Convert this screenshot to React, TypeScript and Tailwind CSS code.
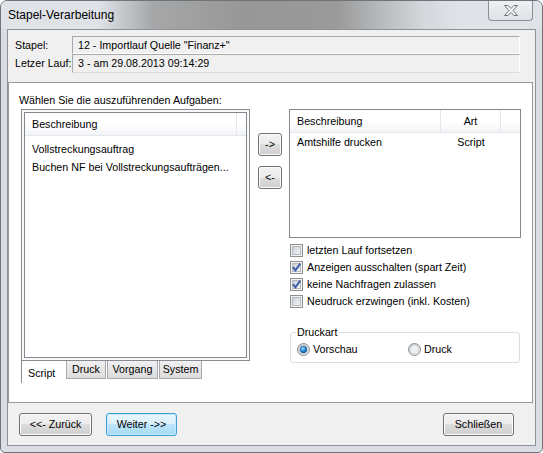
import React from "react";

const font = "font-['Liberation_Sans',Arial,sans-serif]";

function CheckBox({ checked }: { checked?: boolean }) {
  return (
    <svg width="13" height="13" viewBox="0 0 13 13" className="shrink-0">
      <defs>
        <linearGradient id="cbFill" x1="0" y1="0" x2="1" y2="1">
          <stop offset="0" stopColor="#c9cdd3" />
          <stop offset="1" stopColor="#f8f8f8" />
        </linearGradient>
      </defs>
      <rect x="0.5" y="0.5" width="12" height="12" fill="#f4f4f4" stroke="#8e8f8f" />
      <rect x="2.5" y="2.5" width="8" height="8" fill="url(#cbFill)" stroke="#b4b8bf" />
      {checked && (
        <path d="M3 6.2 L5.4 9.3 L10.3 2.6" stroke="#3c5aa8" strokeWidth="1.9" fill="none" />
      )}
    </svg>
  );
}

function Radio({ selected }: { selected?: boolean }) {
  return (
    <svg width="13" height="13" viewBox="0 0 13 13" className="shrink-0">
      <defs>
        <linearGradient id="rbFill" x1="0" y1="0" x2="1" y2="1">
          <stop offset="0" stopColor="#c4c8ce" />
          <stop offset="1" stopColor="#f6f6f6" />
        </linearGradient>
        <radialGradient id="rbDot" cx="0.4" cy="0.35" r="0.7">
          <stop offset="0" stopColor="#9fe0ff" />
          <stop offset="0.5" stopColor="#2a8fd6" />
          <stop offset="1" stopColor="#0d4f8f" />
        </radialGradient>
      </defs>
      <circle cx="6.5" cy="6.5" r="6" fill="url(#rbFill)" stroke="#8e8f8f" />
      <circle cx="6.5" cy="6.5" r="4.3" fill="#eef0f2" stroke="#bfc3c8" strokeWidth="0.6" />
      {selected && <circle cx="6.5" cy="6.5" r="3.4" fill="url(#rbDot)" stroke="#1d4e80" strokeWidth="0.5" />}
    </svg>
  );
}

function Button({ label, primary, className }: { label: string; primary?: boolean; className?: string }) {
  return (
    <div
      className={`h-[23px] flex items-center justify-center rounded-[3px] border whitespace-nowrap ${
        primary
          ? "border-[#3c9fd6] bg-[linear-gradient(#eaf6fd,#d9f0fc_50%,#bee6fd_50%,#a7d9f5)] shadow-[inset_0_0_0_1px_#c8eafc]"
          : "border-[#707070] bg-[linear-gradient(#f2f2f2,#ebebeb_50%,#dddddd_50%,#cfcfcf)] shadow-[inset_0_0_0_1px_#fcfcfc]"
      } ${className ?? ""}`}
    >
      {label}
    </div>
  );
}

function ListHeader({ cols }: { cols: { label: string; w: string; center?: boolean }[] }) {
  return (
    <div className="h-[23px] flex bg-[linear-gradient(#ffffff,#ffffff_50%,#f3f4f6)] border-b border-[#e3e6ea]">
      {cols.map((c) => (
        <div
          key={c.label + c.w}
          className={`${c.w} h-full border-r border-[#e3e6ea] flex items-center ${c.center ? "justify-center" : "pl-[7px]"}`}
        >
          {c.label}
        </div>
      ))}
    </div>
  );
}

export default function App() {
  const checks = [
    { label: "letzten Lauf fortsetzen", checked: false },
    { label: "Anzeigen ausschalten (spart Zeit)", checked: true },
    { label: "keine Nachfragen zulassen", checked: true },
    { label: "Neudruck erzwingen (inkl. Kosten)", checked: false },
  ];

  return (
    <div
      className={`${font} w-[543px] h-[453px] rounded-t-[7px] rounded-b-[5px] overflow-hidden border border-[#6e747b] bg-[#dadee3] text-black relative`}
    >
      {/* title bar */}
      <div className="h-[28px] flex items-center pl-[7px] text-[12px] bg-[linear-gradient(90deg,#dfe3e8_18%,#a6a7a8_28%,#979797_45%,#9a9a9a_62%,#b7b9bb_70%,#d4d7db_78%,#dfe3e8_85%)]">
        Stapel-Verarbeitung
      </div>
      <div className="absolute top-0 left-[487px] w-[45px] h-[20px] rounded-b-[4px] border border-t-0 border-[#8a9099] bg-[linear-gradient(#eef0f3,#dfe2e6)] flex items-center justify-center">
        <svg width="14" height="11" viewBox="0 0 14 11">
          <polygon
            points="0.5,0.5 4,0.5 7,3.5 10,0.5 13.5,0.5 9,5.5 13.5,10.5 10,10.5 7,7.5 4,10.5 0.5,10.5 5,5.5"
            fill="#f4f5f7"
            stroke="#6c727a"
          />
        </svg>
      </div>

      {/* client area */}
      <div className="ml-[6px] w-[529px] h-[417px] border border-[#8d9198] bg-[#f0f0f0] flex flex-col text-[10.7px] whitespace-nowrap">
        {/* header */}
        <div className="flex pt-[6px] pl-[7px] h-[52px]">
          <div className="w-[57px] flex flex-col">
            <div className="h-[18px] flex items-center">Stapel:</div>
            <div className="h-[19px] flex items-center">Letzer Lauf:</div>
          </div>
          <div className="w-[448px] flex flex-col">
            <div className="h-[18px] flex items-center pl-[5px] border border-[#a9a9a9] border-b-white border-r-white bg-[#f0f0f0]">
              12 - Importlauf Quelle "Finanz+"
            </div>
            <div className="h-[19px] flex items-center pl-[5px] border border-[#a9a9a9] border-b-[#dcdcdc] border-r-white bg-[#f0f0f0]">
              3 - am 29.08.2013 09:14:29
            </div>
          </div>
        </div>

        {/* white panel */}
        <div className="w-[525px] h-[321px] border border-[#9a9a9a] bg-white flex flex-col">
          <div className="pl-[10px] pt-[9px] h-[26px] leading-[16px]">Wählen Sie die auszuführenden Aufgaben:</div>
          <div className="flex items-start pl-[12px]">
            {/* left column */}
            <div className="w-[229px] flex flex-col">
              <div className="h-[252px] border border-[#898c95] bg-[#f9f9f9] p-[2px]">
                <div className="h-full border border-[#828790] bg-white">
                  <ListHeader cols={[{ label: "Beschreibung", w: "w-[212px]" }]} />
                  <div className="pt-[4px] pl-[7px]">
                    <div className="h-[18px] flex items-center">Vollstreckungsauftrag</div>
                    <div className="h-[18px] flex items-center">Buchen NF bei Vollstreckungsaufträgen...</div>
                  </div>
                </div>
              </div>
              <div className="flex items-start h-[22px]">
                <div className="w-[45px] h-[22px] border-l border-[#898c95] bg-white flex items-center pl-[6px] pt-[2px]">
                  Script
                </div>
                <div className="w-[40px] h-[18px] border border-t-0 border-[#a7a9ad] bg-[linear-gradient(#f0f0f0,#dcdcdc)] flex items-center justify-center">
                  Druck
                </div>
                <div className="ml-[1px] w-[51px] h-[18px] border border-t-0 border-[#a7a9ad] bg-[linear-gradient(#f0f0f0,#dcdcdc)] flex items-center justify-center">
                  Vorgang
                </div>
                <div className="ml-[1px] w-[43px] h-[18px] border border-t-0 border-[#a7a9ad] bg-[linear-gradient(#f0f0f0,#dcdcdc)] flex items-center justify-center">
                  System
                </div>
              </div>
            </div>

            {/* arrow buttons */}
            <div className="ml-[8px] w-[24px] flex flex-col mt-[24px] gap-[10px]">
              <Button label="->" className="w-[24px]" />
              <Button label="<-" className="w-[24px] h-[22px]" />
            </div>

            {/* right column */}
            <div className="ml-[7px] w-[232px] flex flex-col">
              <div className="h-[129px] border border-[#828790] bg-white">
                <ListHeader
                  cols={[
                    { label: "Beschreibung", w: "w-[151px]" },
                    { label: "Art", w: "w-[60px]", center: true },
                  ]}
                />
                <div className="h-[19px] flex items-center">
                  <div className="w-[151px] pl-[7px]">Amtshilfe drucken</div>
                  <div className="w-[60px] text-center">Script</div>
                </div>
              </div>
              <div className="mt-[4px] flex flex-col">
                {checks.map((c) => (
                  <div key={c.label} className="h-[17px] flex items-center gap-[4px] pl-[1px]">
                    <CheckBox checked={c.checked} />
                    <span>{c.label}</span>
                  </div>
                ))}
              </div>
              <div className="relative mt-[22px] ml-[1px] w-[230px] h-[31px] border border-[#d5dfe5] rounded-[3px]">
                <span className="absolute -top-[8px] left-[5px] bg-white px-[1px] leading-[14px]">Druckart</span>
                <div className="flex items-center h-[14px] mt-[9px] pl-[6px]">
                  <Radio selected />
                  <span className="ml-[3px] w-[95px]">Vorschau</span>
                  <Radio />
                  <span className="ml-[3px]">Druck</span>
                </div>
              </div>
            </div>
          </div>
        </div>

        {/* bottom buttons */}
        <div className="flex items-start pt-[10px] pl-[11px] pr-[21px]">
          <Button label="<<- Zurück" className="w-[73px]" />
          <Button label="Weiter ->>" primary className="w-[71px] ml-[14px]" />
          <Button label="Schließen" className="w-[71px] ml-auto" />
        </div>
      </div>
    </div>
  );
}
